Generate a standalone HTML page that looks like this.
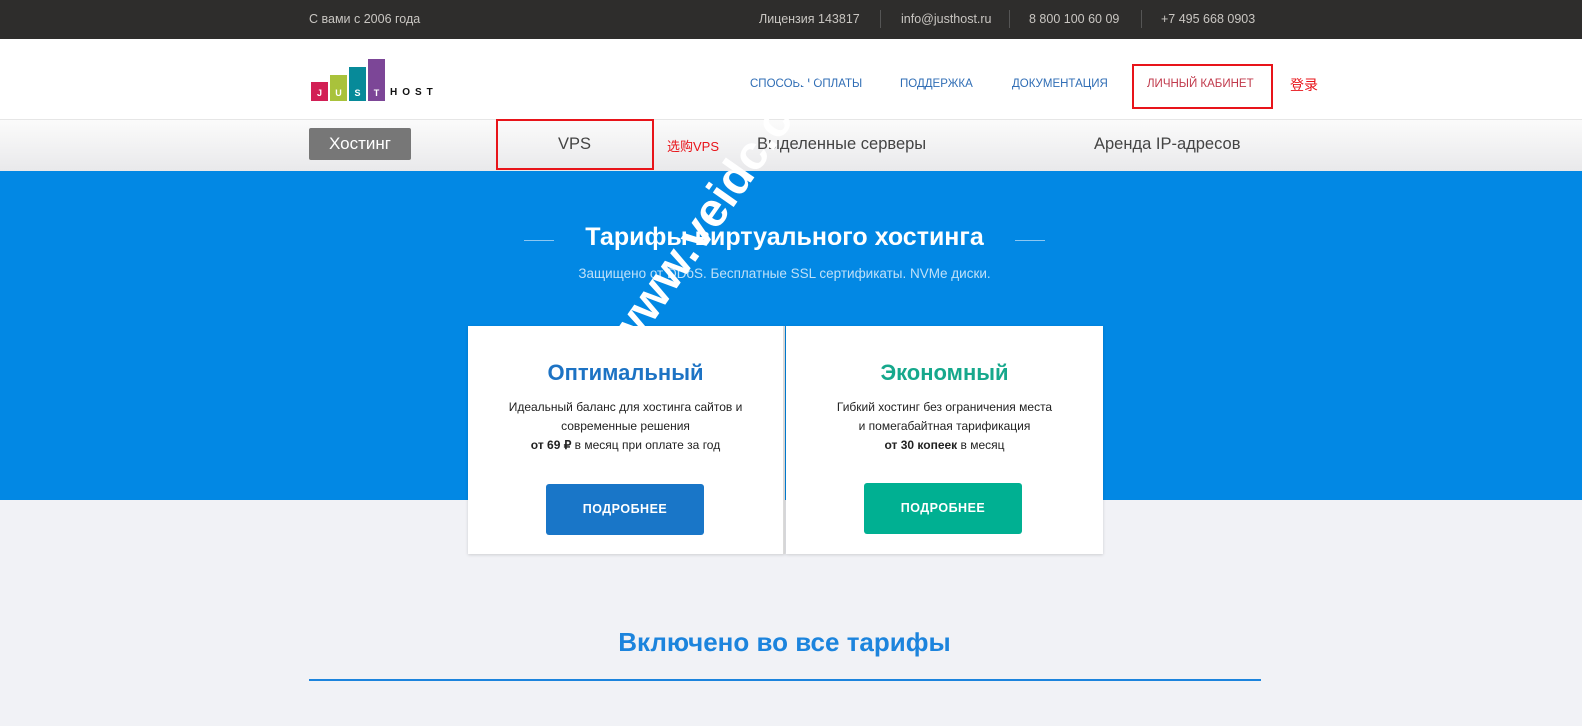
<!DOCTYPE html>
<html><head><meta charset="utf-8"><style>
*{margin:0;padding:0;box-sizing:border-box}
body{width:1582px;height:726px;overflow:hidden;background:#f1f2f6;font-family:"Liberation Sans","Noto Sans CJK SC",sans-serif;position:relative}
.top{height:39px;background:#2e2d2c;color:#c9c6c2;font-size:12.5px;position:relative}
.top span{position:absolute;top:12px}
.sep{position:absolute;top:10px;width:1px;height:18px;background:#555}
.hdr{height:81px;background:#fff;position:relative;border-bottom:1px solid #e6e6e6}
.nav a{position:absolute;top:39px;font-size:11.5px;color:#2f6db5;text-decoration:none}
.sub{height:51px;background:linear-gradient(#fbfbfb,#e9e9eb);position:relative}
.sub span{position:absolute;font-size:16.5px;color:#444}
.blue{height:329px;background:#0288e4;position:relative}
.card{position:absolute;top:326px;width:317px;height:228px;background:#fff;text-align:center;box-shadow:0 1px 3px rgba(0,0,0,.15)}
.card h3{font-size:22px;margin-top:34px}
.card p{font-size:12px;color:#222;line-height:19px;margin-top:12px}
.btn{position:absolute;left:78px;top:158px;width:158px;height:51px;border-radius:3px;color:#fff;font-weight:bold;font-size:12.5px;line-height:51px;letter-spacing:.5px}
</style></head><body>
<div class="top">
<span style="left:309px">С вами с 2006 года</span>
<span style="left:759px">Лицензия 143817</span><div class="sep" style="left:880px"></div>
<span style="left:901px">info@justhost.ru</span><div class="sep" style="left:1009px"></div>
<span style="left:1029px">8 800 100 60 09</span><div class="sep" style="left:1141px"></div>
<span style="left:1161px">+7 495 668 0903</span>
</div>
<div class="hdr">
<div style="position:absolute;left:311px;top:43px;width:17px;height:19px;background:#d21f55;color:#fff;font-size:9px;font-weight:bold;text-align:center;line-height:22px">J</div>
<div style="position:absolute;left:330px;top:36px;width:17px;height:26px;background:#a9c23b;color:#fff;font-size:9px;font-weight:bold;text-align:center;padding-top:13px">U</div>
<div style="position:absolute;left:349px;top:28px;width:17px;height:34px;background:#078a99;color:#fff;font-size:9px;font-weight:bold;text-align:center;padding-top:21px">S</div>
<div style="position:absolute;left:368px;top:20px;width:17px;height:42px;background:#7c4697;color:#fff;font-size:9px;font-weight:bold;text-align:center;padding-top:29px">T</div>
<div style="position:absolute;left:390px;top:48px;font-size:10px;font-weight:bold;letter-spacing:5px;color:#111">HOST</div>
<div class="nav">
<a style="left:750px">СПОСОБЫ ОПЛАТЫ</a>
<a style="left:900px">ПОДДЕРЖКА</a>
<a style="left:1012px">ДОКУМЕНТАЦИЯ</a>
<a style="left:1147px;color:#c0394b">ЛИЧНЫЙ КАБИНЕТ</a>
</div>
<div style="position:absolute;left:1132px;top:25px;width:141px;height:45px;border:2px solid #e8141a"></div>
<div style="position:absolute;left:1290px;top:36px;font-size:14px;color:#e8141a">登录</div>
</div>
<div class="sub">
<div style="position:absolute;left:309px;top:8px;width:102px;height:32px;background:#777;border-radius:2px;color:#fff;font-size:17px;text-align:center;line-height:32px">Хостинг</div>
<span style="left:558px;top:15px">VPS</span>
<div style="position:absolute;left:496px;top:-1px;width:158px;height:51px;border:2px solid #e8141a"></div>
<span style="left:667px;top:16px;font-size:13px;color:#e8141a">选购VPS</span>
<span style="left:757px;top:15px">Выделенные серверы</span>
<span style="left:1094px;top:15px">Аренда IP-адресов</span>
</div>
<div class="blue">
<div style="position:absolute;left:524px;top:69px;width:30px;height:1px;background:#8cc7f2"></div>
<div style="position:absolute;left:1015px;top:69px;width:30px;height:1px;background:#8cc7f2"></div>
<div style="position:absolute;left:0;width:1569px;top:52px;text-align:center;font-size:25px;font-weight:bold;color:#fff">Тарифы виртуального хостинга</div>
<div style="position:absolute;left:0;width:1569px;top:95px;text-align:center;font-size:13.5px;color:#bfe0f8">Защищено от DDoS. Бесплатные SSL сертификаты. NVMe диски.</div>
</div>
<div class="card" style="left:468px;border-right:2px solid #dcdcdc"><h3 style="color:#1d73c4">Оптимальный</h3><p>Идеальный баланс для хостинга сайтов и<br>современные решения<br><b>от 69 ₽</b> в месяц при оплате за год</p><div class="btn" style="background:#1976c8">ПОДРОБНЕЕ</div></div>
<div class="card" style="left:786px"><h3 style="color:#16a88c">Экономный</h3><p>Гибкий хостинг без ограничения места<br>и помегабайтная тарификация<br><b>от 30 копеек</b> в месяц</p><div class="btn" style="background:#00b092;top:157px">ПОДРОБНЕЕ</div></div>
<div style="position:absolute;left:0;width:1569px;top:627px;text-align:center;font-size:26px;font-weight:bold;color:#1c84dd">Включено во все тарифы</div>
<div style="position:absolute;left:309px;top:679px;width:952px;height:2px;background:#1c84dd"></div>
<div style="position:absolute;font-size:48px;font-weight:bold;color:#fff;transform:rotate(-55deg);transform-origin:left top;white-space:nowrap;top:330px;left:595px">www.veidc.com</div>
</body></html>
